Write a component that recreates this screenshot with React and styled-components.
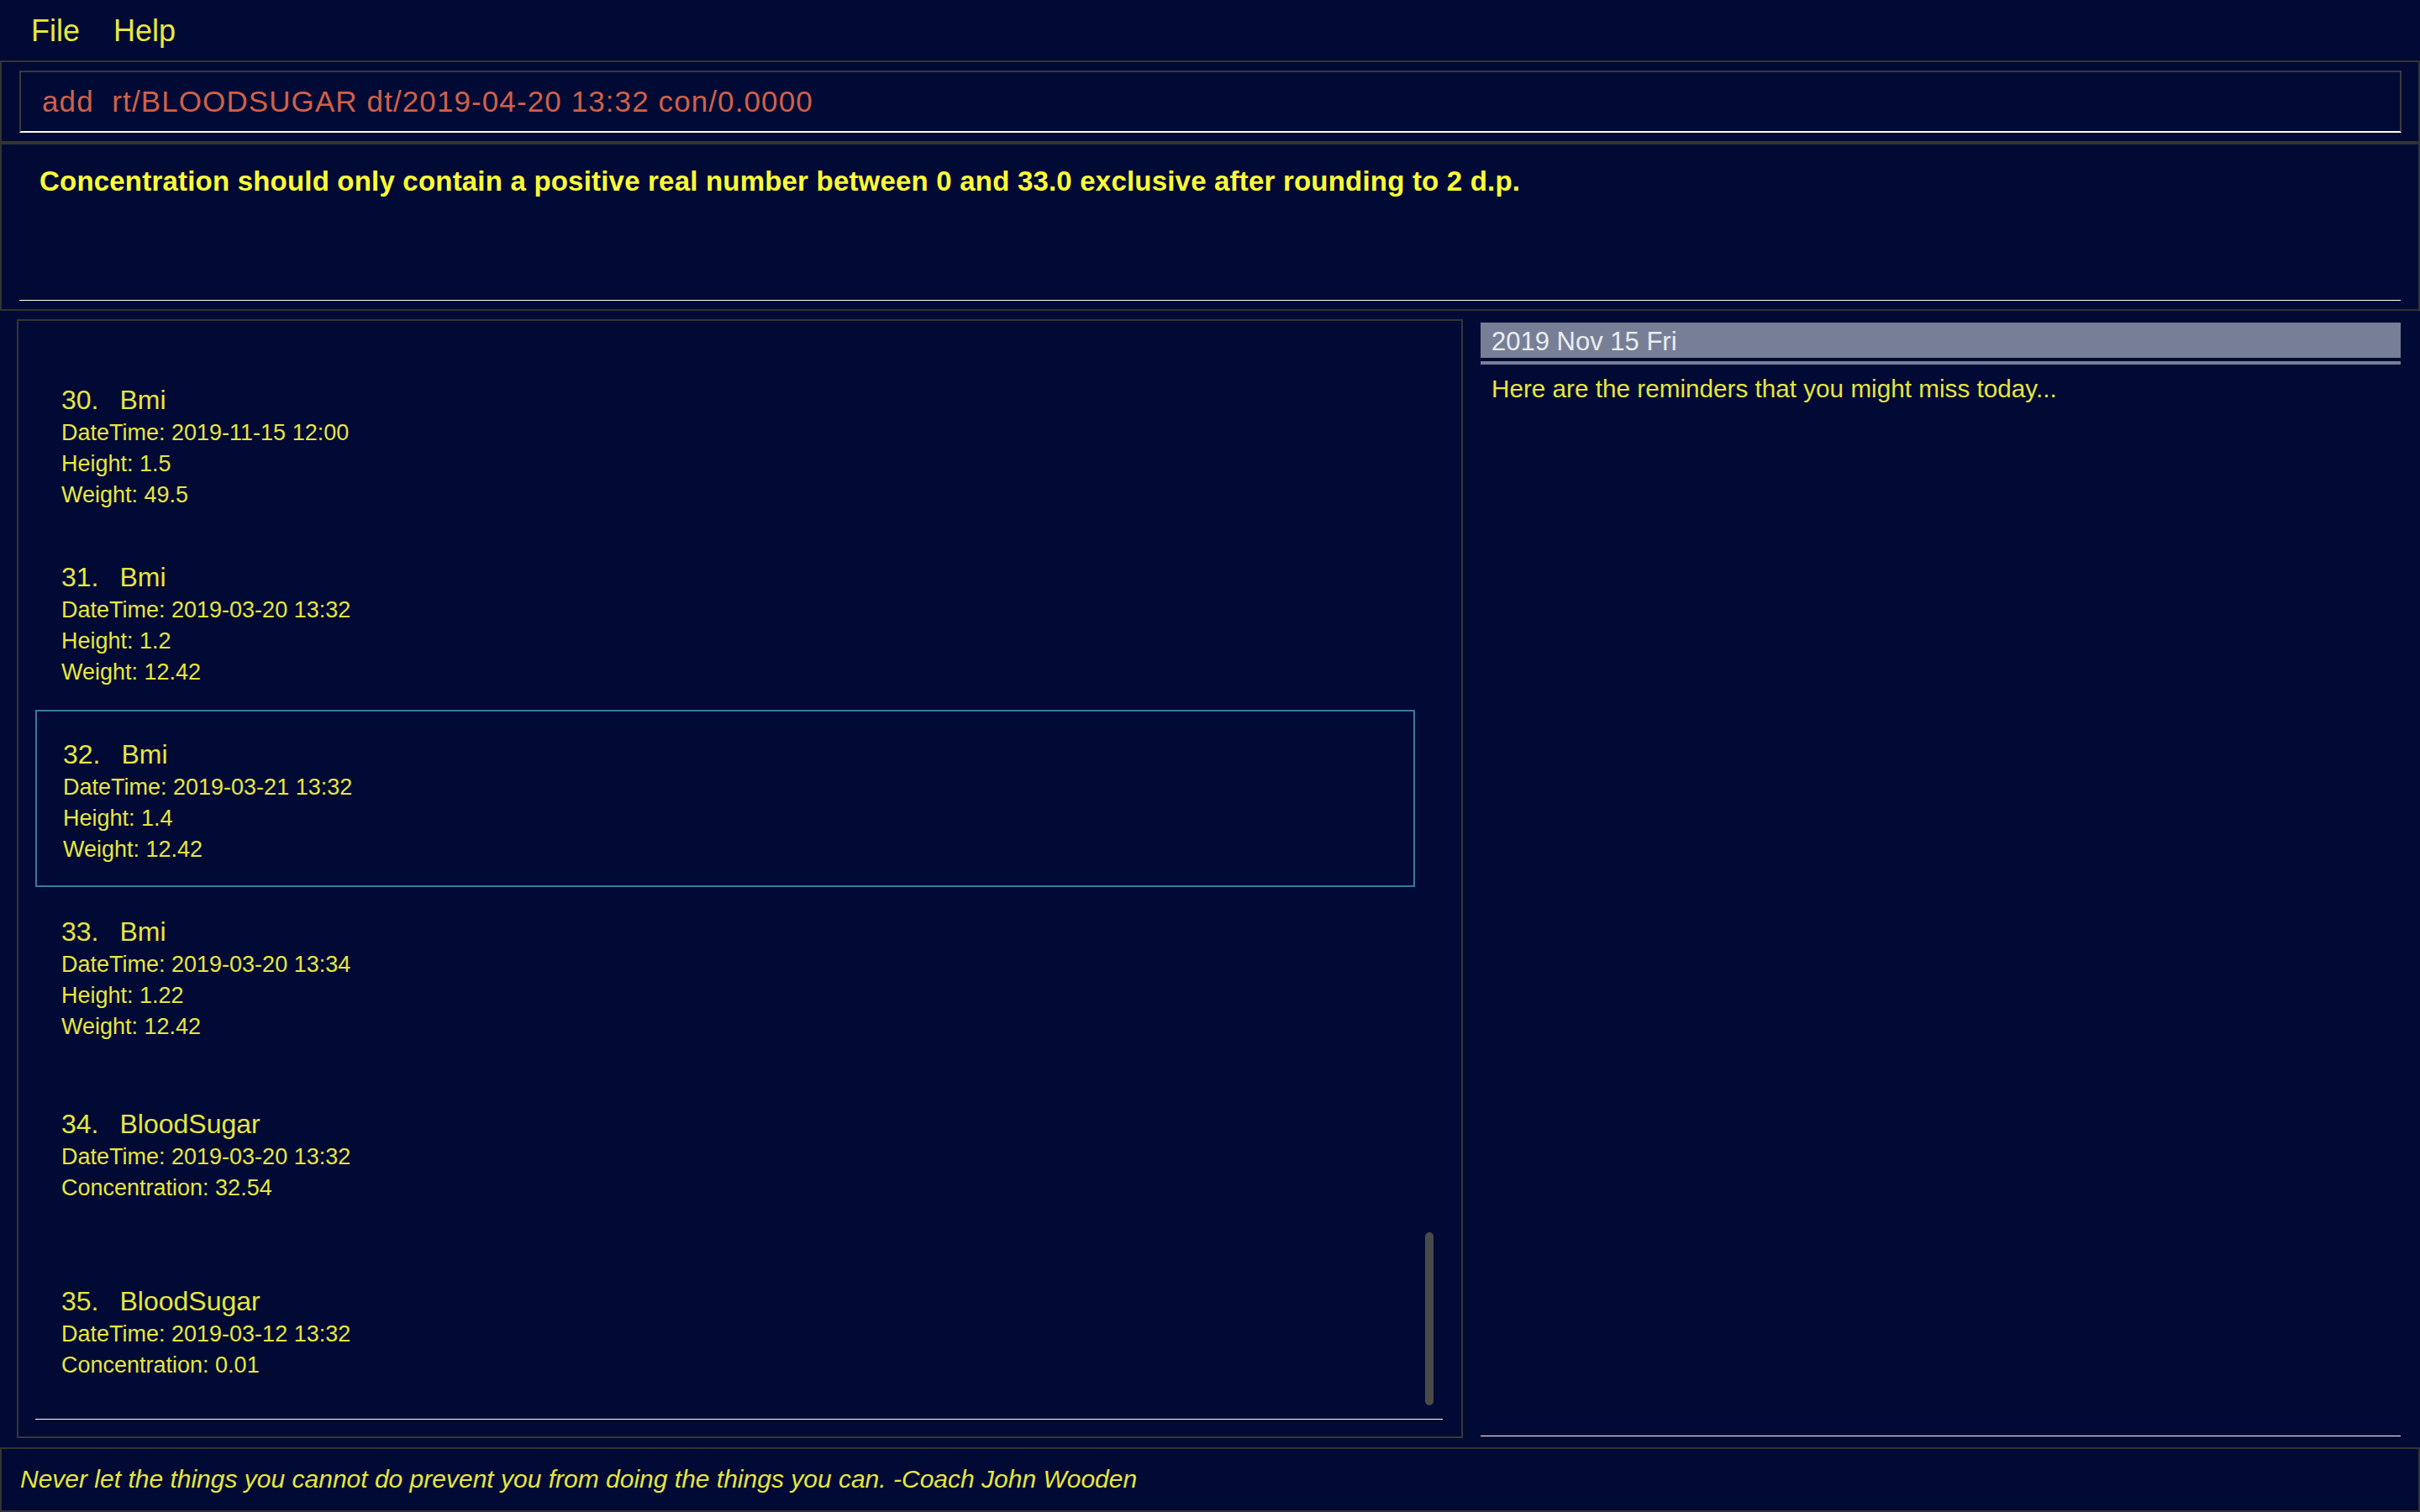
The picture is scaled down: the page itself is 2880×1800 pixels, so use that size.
import { createGlobalStyle, styled } from 'styled-components';

const GlobalStyle = createGlobalStyle`
    html, body {
        margin: 0;
        padding: 0;
        background: #000a34;
    }
    * {
        box-sizing: border-box;
    }
`

const Window = styled.div`
    width: 100vw;
    height: 100vh;
    display: flex;
    flex-direction: column;
    background: #000a34;
    font-family: "Liberation Sans", Arial, sans-serif;
    overflow: hidden;
`

const MenuBar = styled.nav`
    height: 72px;
    flex: 0 0 72px;
    display: flex;
    align-items: center;
    padding-left: 37px;
    gap: 40px;
`

const MenuItem = styled.span`
    color: #e8e83e;
    font-size: 36px;
    line-height: 40px;
    margin-top: 2px;
`

const CommandPanel = styled.div`
    flex: 0 0 98px;
    border: 2px solid #333333;
    padding: 10px 20px 10px 21px;
`

const CommandField = styled.div`
    height: 74px;
    border: 2px solid #3a3a3a;
    border-bottom: 2px solid #ffffff;
    padding-left: 25px;
    color: #d0604a;
    font-size: 35px;
    letter-spacing: 1.1px;
    line-height: 70px;
    white-space: pre;
`

const ResultPanel = styled.div`
    flex: 0 0 200px;
    border: 2px solid #333333;
    padding: 0 21px 10px 21px;
    display: flex;
`

const ResultText = styled.div`
    flex: 1;
    border-bottom: 1px solid #ffffff;
    padding: 24px 0 0 24px;
    color: #ffff36;
    font-size: 33px;
    font-weight: bold;
    letter-spacing: 0.2px;
    line-height: 40px;
`

const Main = styled.div`
    flex: 1;
    display: flex;
    gap: 21px;
    padding: 10px 23px 11px 20px;
    min-height: 0;
`

const ListPanel = styled.section`
    flex: 0 0 1721px;
    border: 2px solid #363636;
    padding: 0 22px 20px 20px;
    display: flex;
`

const ListView = styled.div`
    flex: 1;
    display: flex;
    border-bottom: 1px solid #ffffff;
    overflow: hidden;
`

const Cells = styled.div`
    flex: 1;
    display: flex;
    flex-direction: column;
    justify-content: flex-end;
`

const ScrollTrack = styled.div`
    flex: 0 0 33px;
    display: flex;
    flex-direction: column;
    justify-content: flex-end;
    align-items: center;
    padding: 0 0 16px 0;
`

const ScrollThumb = styled.div`
    width: 10px;
    height: 206px;
    border-radius: 5px;
    background: #4a4a4a;
`

const Cell = styled.div`
    flex: 0 0 211px;
    display: flex;
    flex-direction: column;
    justify-content: center;
    padding: 6px 0 0 31px;
    border: ${props => props.selected ? '2px solid #3b7a98' : 'none'};
    color: #e6e63e;
`

const CellTitle = styled.div`
    display: flex;
    gap: 25px;
    font-size: 32px;
    line-height: 40px;
    margin-bottom: 1px;
`

const CellLine = styled.div`
    font-size: 27px;
    line-height: 37px;
`

const SidePanel = styled.section`
    flex: 1;
    display: flex;
    flex-direction: column;
    padding-top: 4px;
    border-bottom: 1px solid #ffffff;
    margin-bottom: 2px;
`

const DateBar = styled.div`
    height: 42px;
    background: #777f97;
    color: #ececf2;
    font-size: 31px;
    line-height: 42px;
    padding: 2px 0 0 13px;
`

const DateRule = styled.div`
    height: 4px;
    margin-top: 4px;
    background: #777f97;
`

const Reminder = styled.div`
    margin-top: 12px;
    padding-left: 13px;
    color: #e6e63e;
    font-size: 29.7px;
    line-height: 34px;
`

const StatusBar = styled.footer`
    flex: 0 0 77px;
    border: 2px solid #333333;
    padding: 19px 0 0 22px;
    color: #e6e63e;
    font-size: 30px;
    font-style: italic;
    line-height: 34px;
`

const records = [
    { id: 30, type: 'Bmi', lines: ['DateTime: 2019-11-15 12:00', 'Height: 1.5', 'Weight: 49.5'] },
    { id: 31, type: 'Bmi', lines: ['DateTime: 2019-03-20 13:32', 'Height: 1.2', 'Weight: 12.42'] },
    { id: 32, type: 'Bmi', lines: ['DateTime: 2019-03-21 13:32', 'Height: 1.4', 'Weight: 12.42'] },
    { id: 33, type: 'Bmi', lines: ['DateTime: 2019-03-20 13:34', 'Height: 1.22', 'Weight: 12.42'] },
    { id: 34, type: 'BloodSugar', lines: ['DateTime: 2019-03-20 13:32', 'Concentration: 32.54'] },
    { id: 35, type: 'BloodSugar', lines: ['DateTime: 2019-03-12 13:32', 'Concentration: 0.01'] },
]

const App = () => {
    const selected = 32;

    return (
        <Window>
            <GlobalStyle />
            <MenuBar>
                <MenuItem>File</MenuItem>
                <MenuItem>Help</MenuItem>
            </MenuBar>
            <CommandPanel>
                <CommandField>{'add  rt/BLOODSUGAR dt/2019-04-20 13:32 con/0.0000'}</CommandField>
            </CommandPanel>
            <ResultPanel>
                <ResultText>
                    Concentration should only contain a positive real number between 0 and 33.0 exclusive after rounding to 2 d.p.
                </ResultText>
            </ResultPanel>
            <Main>
                <ListPanel>
                    <ListView>
                        <Cells>
                            {records.map(({id, type, lines}) => (
                                <Cell key={id} selected={id === selected}>
                                    <CellTitle>
                                        <span>{id}.</span>
                                        <span>{type}</span>
                                    </CellTitle>
                                    {lines.map(line => <CellLine key={line}>{line}</CellLine>)}
                                </Cell>
                            ))}
                        </Cells>
                        <ScrollTrack>
                            <ScrollThumb />
                        </ScrollTrack>
                    </ListView>
                </ListPanel>
                <SidePanel>
                    <DateBar>2019 Nov 15 Fri</DateBar>
                    <DateRule />
                    <Reminder>Here are the reminders that you might miss today...</Reminder>
                </SidePanel>
            </Main>
            <StatusBar>
                Never let the things you cannot do prevent you from doing the things you can. -Coach John Wooden
            </StatusBar>
        </Window>
    )
}

export default App
